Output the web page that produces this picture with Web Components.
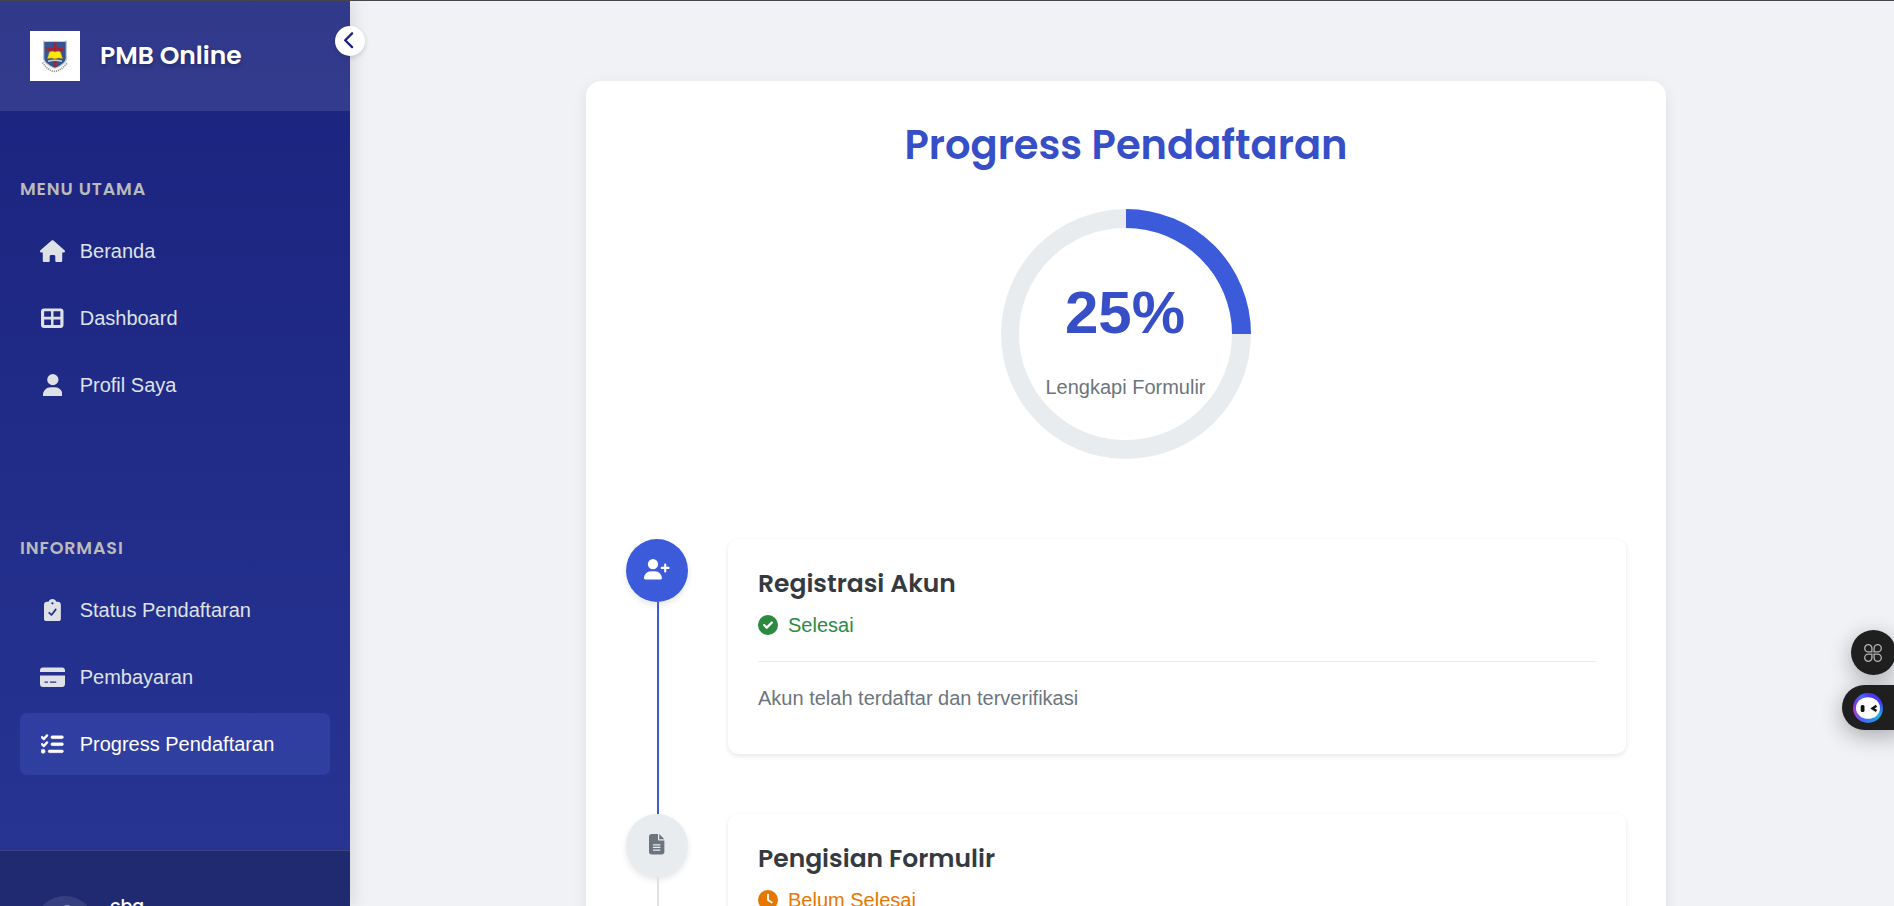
<!DOCTYPE html>
<html lang="id">
<head>
<meta charset="utf-8">
<title>PMB Online</title>
<style>
html,body{margin:0;height:100%;overflow:hidden}
body{background:#f0f2f6;font:20px/30px "Liberation Sans",Arial,sans-serif;color:#343a40}
</style>
</head>
<body>
<pmb-app></pmb-app>
<script>
const HEAD = 'Poppins,Inter,sans-serif';
const define = (name, html) => customElements.define(name, class extends HTMLElement {
  connectedCallback() {
    if (this.shadowRoot) return;
    const t = document.createElement('template');
    t.innerHTML = typeof html === 'function' ? html(this) : html;
    this.attachShadow({mode:'open'}).append(t.content.cloneNode(true));
  }
});

const ICONS = {
  home:['0 0 576 512','<path d="M575.800 255.500c0 18-15 32.100-32 32.100h-32l.7 160.200c0 2.700-.2 5.400-.5 8.100V472c0 22.100-17.900 40-40 40H392c-22.100 0-40-17.900-40-40V376c0-17.700-14.300-32-32-32h-64c-17.700 0-32 14.300-32 32v96c0 22.100-17.900 40-40 40h-80c-22.100 0-40-17.900-40-40V287.600H32c-18 0-32-14-32-32.100 0-9 3-17 10-24L266.400 8c7-7 15-8 22-8s15 2 21 7l255.400 224.500c8 7 12 15 11 24z"/>'],
  table:['0 0 512 512','<path fill-rule="evenodd" d="M64 32C28.700 32 0 60.700 0 96v320c0 35.300 28.700 64 64 64h384c35.300 0 64-28.700 64-64V96c0-35.300-28.700-64-64-64H64zm8 66h156v122H72V98zM284 98h156v122H284V98zM72 284h156v128H72V284zm212 0h156v128H284V284z"/>'],
  user:['0 0 448 512','<path d="M224 256a128 128 0 1 0 0-256 128 128 0 1 0 0 256zm-45.700 48C79.800 304 0 383.800 0 482.300 0 498.700 13.300 512 29.700 512h388.600c16.400 0 29.700-13.300 29.700-29.700C448 383.800 368.200 304 269.700 304h-91.400z"/>'],
  clip:['0 0 384 512','<path fill-rule="evenodd" d="M192 0c-41.800 0-77.400 26.700-90.500 64H64C28.700 64 0 92.700 0 128v320c0 35.300 28.700 64 64 64h256c35.300 0 64-28.700 64-64V128c0-35.300-28.700-64-64-64h-37.500C269.400 26.700 233.800 0 192 0zm0 72a26 26 0 1 1 0 52 26 26 0 1 1 0-52zm89 182L186 377c-8 9-22 9-30 0l-50-48c-8-8-8-20 0-28s20-8 28 0l35 34 81-108c7-9 19-11 28-4s10 22 3 31z"/>'],
  card:['0 0 576 512','<path fill-rule="evenodd" d="M64 32C28.700 32 0 60.700 0 96v40h576V96c0-35.300-28.700-64-64-64H64zM576 216H0v200c0 35.300 28.700 64 64 64h448c35.300 0 64-28.700 64-64V216zM112 356h64c8 0 12 5 12 12s-4 12-12 12h-64c-8 0-12-5-12-12s4-12 12-12zm112 12c0-7 4-12 12-12h132c8 0 12 5 12 12s-4 12-12 12H236c-8 0-12-5-12-12z"/>'],
  tasks:['0 0 512 512','<path stroke="currentColor" stroke-width="10" d="M152.100 38.200c9.900 8.900 10.700 24 1.800 33.900l-72 80c-4.400 4.900-10.600 7.800-17.200 7.900s-12.900-2.400-17.600-7L7 113c-9.300-9.400-9.300-24.600 0-34s24.600-9.400 33.900 0l22.100 22.100 55.100-61.200c8.900-9.900 24-10.700 33.900-1.800zm0 160c9.900 8.900 10.700 24 1.800 33.900l-72 80c-4.400 4.900-10.600 7.800-17.200 7.900s-12.900-2.400-17.600-7L7 273c-9.400-9.400-9.400-24.600 0-33.900s24.600-9.400 33.900 0l22.100 22.100 55.100-61.200c8.900-9.900 24-10.700 33.900-1.800zM224 96c0-17.700 14.300-32 32-32h224c17.700 0 32 14.300 32 32s-14.300 32-32 32H256c-17.700 0-32-14.300-32-32zm0 160c0-17.700 14.300-32 32-32h224c17.700 0 32 14.300 32 32s-14.300 32-32 32H256c-17.700 0-32-14.300-32-32zm-64 160c0-17.700 14.300-32 32-32h288c17.700 0 32 14.300 32 32s-14.300 32-32 32H192c-17.700 0-32-14.300-32-32zM48 368a48 48 0 1 1 0 96 48 48 0 1 1 0-96z"/>'],
  userplus:['0 0 640 512','<path d="M96 128a128 128 0 1 1 256 0 128 128 0 1 1-256 0zM0 482.300C0 383.800 79.800 304 178.300 304h91.400C368.200 304 448 383.800 448 482.300c0 16.400-13.300 29.700-29.700 29.700H29.700C13.300 512 0 498.700 0 482.300z"/><path d="M504 312v-60h-60c-15 0-26-12-26-28s11-28 26-28h60v-56c0-15 11-26 26-26s26 11 26 26v56h54c15 0 28 12 28 28s-13 28-28 28h-54v60c0 14-11 24-26 24s-26-10-26-24z"/>'],
  file:['0 0 384 512','<path fill-rule="evenodd" d="M64 0C28.700 0 0 28.700 0 64v384c0 35.300 28.700 64 64 64h256c35.300 0 64-28.700 64-64V160H256c-17.700 0-32-14.300-32-32V0H64zm192 0v128h128L256 0zM112 256h160c8.800 0 16 7.200 16 16s-7.200 16-16 16H112c-8.800 0-16-7.200-16-16s7.200-16 16-16zm0 64h160c8.800 0 16 7.200 16 16s-7.200 16-16 16H112c-8.800 0-16-7.200-16-16s7.200-16 16-16zm0 64h160c8.800 0 16 7.200 16 16s-7.200 16-16 16H112c-8.800 0-16-7.200-16-16s7.200-16 16-16z"/>'],
  check:['0 0 512 512','<path fill-rule="evenodd" d="M256 512A256 256 0 1 0 256 0a256 256 0 1 0 0 512zm119-300L245 343c-12 12-30 12-42 0l-66-66c-11-11-11-29 0-40s29-11 40 0l47 46 111-111c11-11 29-11 40 0s11 29 0 40z"/>'],
  clock:['0 0 512 512','<path fill-rule="evenodd" d="M256 0a256 256 0 1 1 0 512 256 256 0 1 1 0-512zm-24 120v136c0 8 4 15.500 10.700 20l96 64c11 7.400 25.900 4.400 33.300-6.700s4.400-25.900-6.700-33.300L280 243.200V120c0-13.300-10.700-24-24-24s-24 10.700-24 24z"/>'],
  left:['0 0 320 512','<path d="M9.400 233.400c-12.500 12.500-12.500 32.800 0 45.300l192 192c12.500 12.500 32.800 12.500 45.300 0s12.500-32.800 0-45.300L77.300 256 246.600 86.600c12.500-12.500 12.500-32.800 0-45.300s-32.800-12.500-45.300 0l-192 192z"/>']
};

define('pmb-icon', el => {
  const [box, body] = ICONS[el.getAttribute('name')];
  const [, , w, h] = box.split(' ').map(Number);
  const s = +(el.getAttribute('size') || 20);
  return `<style>:host{display:inline-flex;justify-content:center;align-items:center;flex:none}svg{display:block;fill:currentColor}</style>
  <svg width="${s*w/512}" height="${s*h/512}" viewBox="${box}">${body}</svg>`;
});

define('pmb-crest', `<style>:host{display:block;width:50px;height:50px;background:#fff;flex:none}svg{display:block}</style>
<svg width="50" height="50" viewBox="0 0 50 50">
<path d="M13 9.500l4 .8q8-1.300 16 0l4-.8v19q-1 5-12 9.500Q14 33.500 13 28.500z" fill="#c3c8cf"/>
<path d="M14.300 11h21.400v16.500q-.7 5.300-10.700 9.200-10-3.900-10.700-9.200z" fill="#345591"/>
<path d="M23.500 11.500h3v5.200h7v3h-7v16h-3v-16h-7v-3h7z" fill="#a52334"/>
<path d="M19.500 21q3-1.500 5.500 0 2.500-1.500 5.500 0l2 6.500q-4.500-1-7.500.5-3-1.500-7.500-.5z" fill="#fbe80b" stroke="#b99c17" stroke-width=".5"/>
<path d="M18 30.300q7-2 14 0" fill="none" stroke="#c7ccd4" stroke-width="1.600"/>
<path d="M12.500 31.500Q24 49 37.500 31.500" fill="none" stroke="#9a9d9f" stroke-width="1.800" stroke-dasharray="1.200 .9"/>
</svg>`);

define('pmb-brand', `<style>
:host{display:flex;align-items:flex-start;gap:20px;box-sizing:border-box;height:110px;padding:30px;background:rgba(255,255,255,.1)}
span{font:600 25px/50px ${HEAD};color:#fff;text-shadow:0 2px 4px rgba(0,0,0,.3)}
</style><pmb-crest></pmb-crest><span><slot></slot></span>`);

define('pmb-nav-item', el => `<style>
:host{display:flex;align-items:center;box-sizing:border-box;height:62px;padding:0 20px;border-radius:7px;color:#dee2e6}
:host([active]){background:rgba(66,85,190,.38);color:#fff}
pmb-icon{width:25px;margin-right:14.700px}
</style><pmb-icon name="${el.getAttribute('icon')}" size="22.5"></pmb-icon><slot></slot>`);

define('pmb-nav-group', el => `<style>
:host{display:flex;flex-direction:column;gap:5px;padding:0 20px}
h3{margin:0 0 11px;font:600 17.500px/30px ${HEAD};letter-spacing:.875px;color:#bbb}
</style><h3>${el.getAttribute('label')}</h3><slot></slot>`);

define('pmb-profile', `<style>
:host{display:flex;gap:15px;box-sizing:border-box;height:150px;padding:45px 35px;background:rgba(23,32,80,.5);border-top:1px solid rgba(255,255,255,.12);color:#fff}
div{width:60px;height:60px;border-radius:50%;background:rgba(255,255,255,.1);display:flex;justify-content:center;flex:none;color:#98a0c5}
pmb-icon{align-self:flex-start;margin:9px 0 0 4px}
span{font:500 17.500px/26px ${HEAD};margin-top:-3px}
</style><div><pmb-icon name="user" size="25"></pmb-icon></div><span><slot></slot></span>`);

define('pmb-sidebar', `<style>
:host{display:flex;flex-direction:column;position:relative;width:350px;height:905px;flex:none;background:linear-gradient(#1a237e,#283593);box-shadow:4px 0 15px rgba(0,0,0,.1);z-index:1}
button{position:absolute;left:335px;top:25px;width:30px;height:30px;border:0;padding:0 0 1px 0;border-radius:50%;background:#fff;color:#1a237e;display:flex;align-items:center;justify-content:center;box-shadow:0 2px 5px rgba(0,0,0,.15)}
.a{margin-top:63px}.b{margin-top:117px}
pmb-profile{margin-top:75px;flex:none}
.clip{display:flex;flex-direction:column;height:905px;overflow:hidden}
pmb-brand,pmb-nav-group{flex:none}
</style><div class="clip">
<pmb-brand>PMB Online</pmb-brand>
<pmb-nav-group class="a" label="MENU UTAMA">
<pmb-nav-item icon="home">Beranda</pmb-nav-item><pmb-nav-item icon="table">Dashboard</pmb-nav-item><pmb-nav-item icon="user">Profil Saya</pmb-nav-item>
</pmb-nav-group>
<pmb-nav-group class="b" label="INFORMASI">
<pmb-nav-item icon="clip">Status Pendaftaran</pmb-nav-item><pmb-nav-item icon="card">Pembayaran</pmb-nav-item><pmb-nav-item icon="tasks" active>Progress Pendaftaran</pmb-nav-item>
</pmb-nav-group>
<pmb-profile>cba</pmb-profile></div>
<button aria-label="Tutup menu"><pmb-icon name="left" size="18.5"></pmb-icon></button>`);

define('pmb-ring', el => `<style>
:host{display:grid;place-items:start;width:250px;height:250px;border-radius:50%;background:conic-gradient(#3b5bdb 0 ${el.getAttribute('value')}%,#e9ecef 0)}
div{width:213px;height:212px;margin:19px 0 0 18px;border-radius:50%;background:#fff;display:flex;flex-direction:column;align-items:center;white-space:nowrap;color:#6c757d}
b{font-size:60px;line-height:90px;color:#364fc7;margin:40px 1px 14px 0}
</style><div><b>${el.getAttribute('value')}%</b><span><slot></slot></span></div>`);

define('pmb-step', el => {
  const done = el.hasAttribute('done');
  return `<style>
:host{display:flex;gap:40px;height:275px}
.rail{display:flex;flex-direction:column;align-items:center;width:62px;flex:none}
.dot{display:flex;align-items:center;justify-content:center;width:62px;height:63px;border-radius:50%;flex:none;background:${done?'#3b5bdb':'#e9ecef'};color:${done?'#fff':'#6c757d'};box-shadow:0 3px 6px rgba(0,0,0,.1)}
.dot pmb-icon{margin-top:-2px}
.line{width:2px;flex:1;margin-left:2px;background:${done?'#3b5bdb':'#dee2e6'}}
.card{flex:1;box-sizing:border-box;height:215px;padding:29px 30px 0;border-radius:10px;background:#fff;box-shadow:0 2px 5px rgba(0,0,0,.1)}
h3{margin:0;font:600 25px/32px ${HEAD};color:#343a40}
.st{display:flex;align-items:center;gap:10px;margin-top:10px;padding-bottom:21px;border-bottom:1px solid #e9ecef;color:${done?'#2b8a3e':'#e67700'}}
p{margin:21px 0 0;color:#6c757d}
</style><div class="rail"><div class="dot"><pmb-icon name="${el.getAttribute('icon')}" size="20.5"></pmb-icon></div><div class="line"></div></div>
<div class="card"><h3>${el.getAttribute('label')}</h3><div class="st"><pmb-icon name="${done?'check':'clock'}"></pmb-icon><span>${el.getAttribute('status')}</span></div><p><slot></slot></p></div>`;
});

define('pmb-progress', `<style>
:host{display:flex;flex-direction:column;box-sizing:border-box;width:1080px;padding:40px 40px 0;background:#fff;border-radius:15px;box-shadow:0 4px 15px rgba(0,0,0,.08)}
h1{margin:0;text-align:center;font:600 40px/48px ${HEAD};color:#364fc7}
pmb-ring{align-self:center;margin:40px 0 80px}
</style><h1>Progress Pendaftaran</h1><pmb-ring value="25">Lengkapi Formulir</pmb-ring>
<pmb-step done icon="userplus" label="Registrasi Akun" status="Selesai">Akun telah terdaftar dan terverifikasi</pmb-step>
<pmb-step icon="file" label="Pengisian Formulir" status="Belum Selesai"></pmb-step>`);

define('pmb-assistant', `<style>
:host{position:absolute;right:0;top:629px;width:52px;display:flex;flex-direction:column;gap:10px;z-index:3}
div{box-sizing:border-box;height:45px;background:#1f1f1f;box-shadow:0 6px 22px rgba(0,0,0,.3);flex:none}
.t{width:45px;margin-left:9px;border-radius:50%;padding:14px 0 0 13px}
.p{width:60px;border-radius:23px 0 0 23px;padding:8px 0 0 11px}
svg{display:block}
i{display:block;box-sizing:border-box;width:30px;height:30px;border-radius:50%;padding:3px;background:conic-gradient(#4b3cfa,#4038fa 18%,#18b8da 36%,#2b8fe6 42%,#3d6cf5 55%,#a63cd8 72%,#7a35ee 80%,#4669ff 92%,#4b3cfa)}
</style>
<div class="t"><svg width="18" height="18" viewBox="0 0 18 18" fill="none" stroke="#b4b4b4" stroke-width="1.300"><path d="M7.900 7.900H4.300A3.600 3.600 0 1 1 7.900 4.300zM10.100 7.900V4.300a3.600 3.600 0 1 1 3.600 3.600zM7.900 10.100v3.600a3.600 3.600 0 1 1-3.600-3.600zM10.100 10.100h3.600a3.600 3.600 0 1 1-3.600 3.600z"/></svg></div>
<div class="p"><i><svg width="24" height="24" viewBox="0 0 24 24"><ellipse cx="12" cy="12" rx="12" ry="10.800" fill="#fff"/><rect x="4.700" y="9" width="3.800" height="7" rx="1.500" fill="#111"/><path d="M20.500 9.800l-4 2.700 4 2.500" fill="none" stroke="#111" stroke-width="2.400"/></svg></i></div>`);

define('pmb-app', `<style>
:host{display:flex;position:relative;box-sizing:border-box;width:100%;height:906px;border-top:1px solid #45454d;overflow:hidden}
main{flex:1;display:flex;justify-content:center;align-items:flex-start;padding:80px 0 0 8px}
</style><pmb-sidebar></pmb-sidebar><main><pmb-progress></pmb-progress></main><pmb-assistant></pmb-assistant>`);
</script>
</body>
</html>
